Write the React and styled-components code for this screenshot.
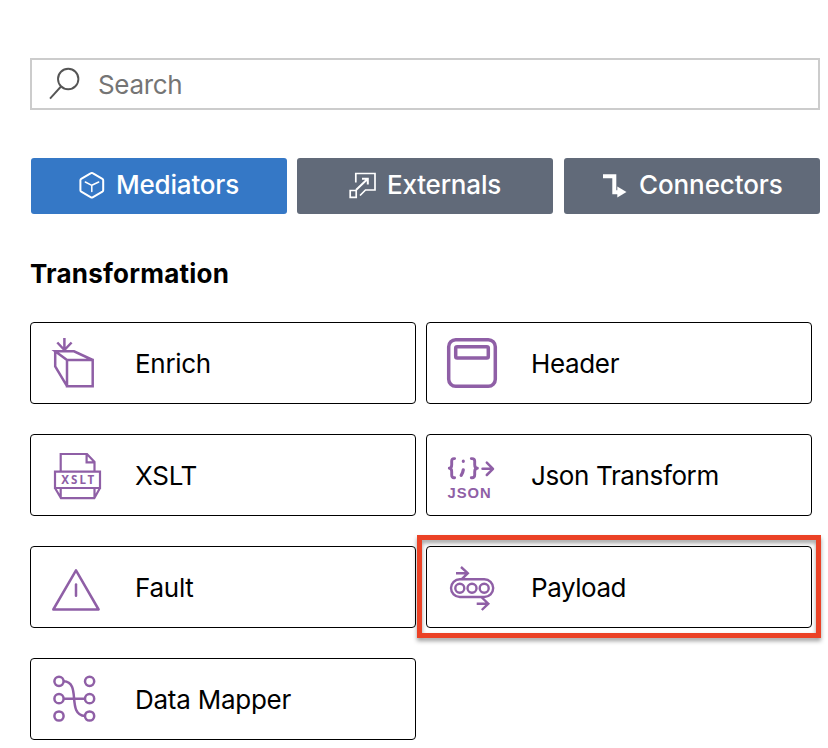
import React from "react";
import styled, { createGlobalStyle } from "styled-components";

const GlobalStyle = createGlobalStyle`
  body {
    margin: 0;
    background: #fff;
    font-family: Inter, "Liberation Sans", sans-serif;
    font-size: 26px;
    color: #000;
  }
`;

const Panel = styled.main`
  box-sizing: border-box;
  width: 828px;
  height: 748px;
  padding: 58px 0 0 30px;
  overflow: hidden;
`;

const SearchBox = styled.label`
  box-sizing: border-box;
  display: flex;
  align-items: center;
  width: 790px;
  height: 52px;
  border: 2px solid #ccc;
`;

const SearchIcon = styled.svg`
  width: 66px;
  height: 48px;
  flex: none;
  fill: none;
  stroke: #555;
  stroke-width: 1.9;
`;

const SearchInput = styled.input`
  flex: 1;
  min-width: 0;
  padding: 1px 0 0;
  border: 0;
  outline: 0;
  background: transparent;
  font: inherit;
  letter-spacing: -0.35px;
  &::placeholder {
    color: #757575;
    opacity: 1;
  }
`;

const Tabs = styled.nav`
  display: grid;
  grid-template-columns: 256px 256px 256px;
  column-gap: 10px;
  width: 789px;
  margin: 48px 0 0 1px;
  & > :last-child {
    margin-left: 1px;
  }
`;

const Tab = styled.button`
  box-sizing: border-box;
  display: flex;
  align-items: center;
  width: 256px;
  height: 56px;
  padding: 0 0 2px ${(p) => p.$inset}px;
  border: 0;
  border-radius: 3px;
  background: ${(p) => (p.$active ? "#3578c6" : "#616a79")};
  color: #fff;
  font: inherit;
  font-weight: 500;
`;

const TabIcon = styled.svg`
  width: 28px;
  height: 28px;
  flex: none;
  fill: none;
  stroke: #fff;
`;

const Text = styled.span`
  margin-left: ${(p) => p.$gap || 0}px;
  padding-top: ${(p) => p.$drop || 0}px;
  padding-bottom: ${(p) => p.$lift || 0}px;
  letter-spacing: ${(p) => p.$spacing || 0}px;
  white-space: nowrap;
`;

const Heading = styled.h2`
  margin: 44px 0 0;
  height: 32px;
  font-size: 26px;
  line-height: 32px;
  font-weight: 700;
  letter-spacing: 0.22px;
`;

const Grid = styled.div`
  display: grid;
  grid-template-columns: 386px 386px;
  grid-auto-rows: 82px;
  gap: 30px 10px;
  margin-top: 32px;
`;

const Card = styled.div`
  box-sizing: border-box;
  position: relative;
  display: flex;
  align-items: center;
  border: 1px solid #000;
  border-radius: 4px;
`;

const Highlight = styled.div`
  position: absolute;
  inset: -12px -10px -11px;
  border: 5px solid #eb4226;
  filter: drop-shadow(0 3px 2px rgba(0, 0, 0, 0.38));
  pointer-events: none;
`;

const CardIcon = styled.svg`
  width: 104px;
  height: 80px;
  flex: none;
  fill: none;
  stroke: #8f5fa6;
  stroke-width: 2.5;
`;

const Glyph = styled.text`
  fill: #8f5fa6;
  stroke: none;
  font-weight: 700;
  font-size: ${(p) => p.$size}px;
  font-family: ${(p) => p.$family}, sans-serif;
`;

const tabs = [
  {
    label: "Mediators", active: true, inset: 47, gap: 10, spacing: -0.2,
    icon: (
      <g strokeLinejoin="round" strokeLinecap="round">
        <path d="M13 2.2Q13.8 1.7 14.6 2.2L24.4 7.8Q25.2 8.3 25.2 9.2V19.3Q25.2 20.2 24.4 20.7L14.6 26.3Q13.8 26.8 13 26.3L3.2 20.7Q2.4 20.2 2.4 19.3V9.2Q2.4 8.3 3.2 7.8Z" strokeWidth="2" />
        <path d="M7.3 11L13.8 14.3L20.7 11M13.8 14.3V20.5" strokeWidth="1.5" />
      </g>
    ),
  },
  {
    label: "Externals", inset: 51, gap: 11, spacing: -0.2,
    icon: (
      <g strokeWidth="1.7">
        <path d="M7.8 11.5V2.5H27V19H17.5L12 24.5" />
        <path d="M2.2 19.5H8.2V26.3H2.2Z" />
        <path d="M8 19L19.5 8M14 7.7H19.8V13.5" strokeWidth="2" />
      </g>
    ),
  },
  {
    label: "Connectors", inset: 38, gap: 9, spacing: -0.1,
    icon: (
      <g>
        <path d="M1 5.2H12.3V21.2H17" strokeWidth="4" />
        <path d="M15.3 15.6L24.5 21L15.3 26.4Z" fill="#fff" stroke="none" />
      </g>
    ),
  },
];

const cards = [
  {
    label: "Enrich", spacing: -0.3,
    icon: (
      <path d="M33.4 15V28M26.3 19.5L33.4 27L40.6 19.5M36 37L24.2 28.3H43L61.7 37M36 37H61.7V63.2H36ZM24.2 28.3V43.5L36 63.2" />
    ),
  },
  {
    label: "Header", spacing: -0.35,
    icon: (
      <g strokeWidth="3.5">
        <rect x="21.7" y="16.7" width="46.6" height="46.6" rx="7" />
        <rect x="28.7" y="23.7" width="32.6" height="11.3" rx="1.5" />
      </g>
    ),
  },
  {
    label: "XSLT", spacing: -0.25,
    icon: (
      <g strokeWidth="2.2">
        <path d="M29.7 36.5V19H56L63.5 27V36.5M55.6 19V27.3H63.5" />
        <path d="M24 36.7H69V53H24ZM24 53L30 63.2H63.3L69 53M29.7 53V63.2M63.5 53V63.2" />
        <Glyph x="30.3" y="49" $size={11.6} $family="'Noto Sans'" textLength="33">XSLT</Glyph>
      </g>
    ),
  },
  {
    label: "Json Transform", spacing: -0.37,
    icon: (
      <g strokeWidth="2.9" strokeLinecap="round" strokeLinejoin="round">
        <path d="M27.6 23.6H27Q24.7 23.6 24.7 26V29.8Q24.7 33.3 22.3 33.3Q24.7 33.3 24.7 36.8V40Q24.7 42.7 27 42.7H27.6" />
        <path d="M44.3 23.6H45Q47.7 23.6 47.7 26V29.8Q47.7 33.3 50.4 33.3Q47.7 33.3 47.7 36.8V40Q47.7 42.7 45 42.7H44.3" />
        <path d="M36.3 26.2V26.3M36.3 34.8Q36 37.5 34.2 40.3" strokeWidth="3.2" />
        <path d="M55.5 33.8H65.7M59.8 27.6L66 33.8L59.8 40" strokeWidth="2.5" />
        <Glyph x="20.5" y="63" $size={14.8} $family="'Liberation Sans'" textLength="43.3">JSON</Glyph>
      </g>
    ),
  },
  {
    label: "Fault", spacing: -0.25,
    icon: (
      <g strokeLinejoin="round" strokeLinecap="round">
        <path d="M45 23.4L67.6 62.5H22.3Z" />
        <path d="M45 37.4V48.8" />
      </g>
    ),
  },
  {
    label: "Payload", spacing: -0.45, highlighted: true,
    icon: (
      <g strokeWidth="2.4">
        <rect x="24" y="32.2" width="42.2" height="17.8" rx="8.9" />
        <circle cx="32.8" cy="41.2" r="4.5" />
        <circle cx="45" cy="41.2" r="4.5" />
        <circle cx="57.2" cy="41.2" r="4.5" />
        <path d="M29 26.2H40.8M34 20L40.8 26.2L34.5 32.4M49.7 56.7H61.3M54.8 50.5L61.3 56.7L54.8 63" />
      </g>
    ),
  },
  {
    label: "Data Mapper", spacing: -0.25,
    icon: (
      <g>
        {[28, 58.6].map((x) =>
          [22.3, 39.7, 57].map((y) => <circle key={`${x}-${y}`} cx={x} cy={y} r="4.6" />)
        )}
        <path d="M32.6 39.7H54M32.6 22.3C51 23 35 55.5 54 57" />
      </g>
    ),
  },
];

export default function App() {
  return (
    <>
      <GlobalStyle />
      <Panel>
        <SearchBox>
          <SearchIcon viewBox="0 0 66 48">
            <circle cx="36.2" cy="19" r="10.2" />
            <path d="M29 26.5L18 38.7" />
          </SearchIcon>
          <SearchInput placeholder="Search" />
        </SearchBox>
        <Tabs>
          {tabs.map((t) => (
            <Tab key={t.label} $active={t.active} $inset={t.inset}>
              <TabIcon viewBox="0 0 28 28">{t.icon}</TabIcon>
              <Text $gap={t.gap} $spacing={t.spacing} $lift={2}>{t.label}</Text>
            </Tab>
          ))}
        </Tabs>
        <Heading>Transformation</Heading>
        <Grid>
          {cards.map((c) => (
            <Card key={c.label}>
              <CardIcon viewBox="0 0 104 80">{c.icon}</CardIcon>
              <Text $spacing={c.spacing} $drop={1}>{c.label}</Text>
              {c.highlighted && <Highlight />}
            </Card>
          ))}
        </Grid>
      </Panel>
    </>
  );
}
